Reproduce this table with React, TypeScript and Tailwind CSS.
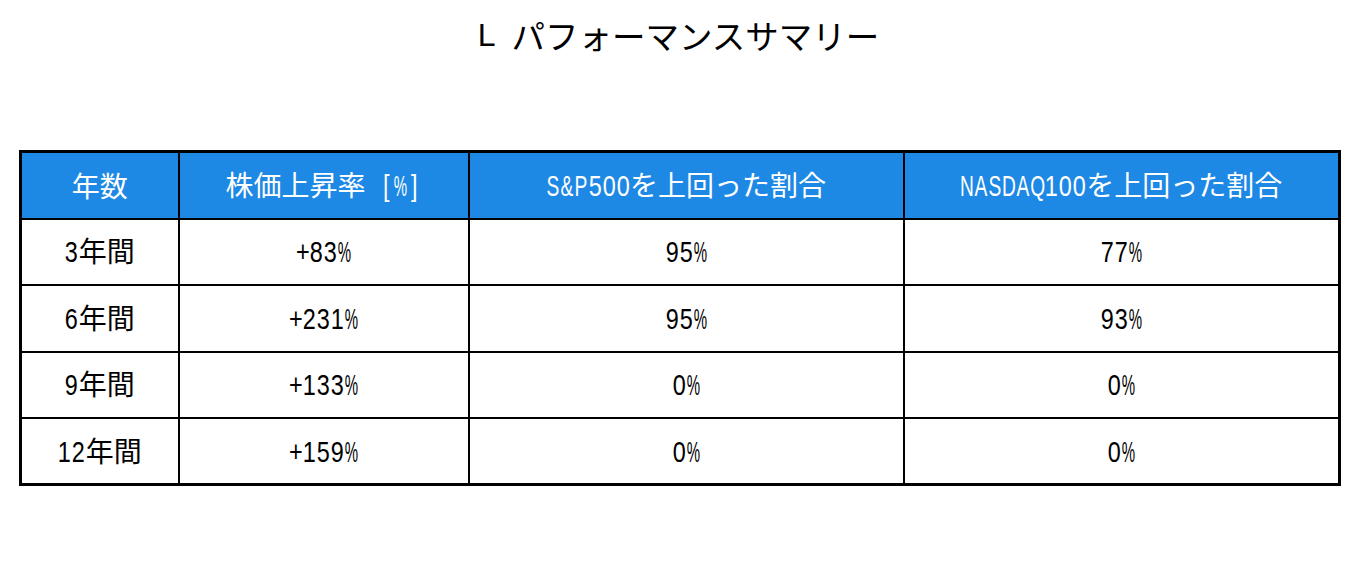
const cjk = '"Noto Sans CJK JP", sans-serif';

const headers = ["年数", "株価上昇率 [%]", "S&P500を上回った割合", "NASDAQ100を上回った割合"];

const rows = [
  ["3年間", "+83%", "95%", "77%"],
  ["6年間", "+231%", "95%", "93%"],
  ["9年間", "+133%", "0%", "0%"],
  ["12年間", "+159%", "0%", "0%"],
];

const widths = ["w-[158px]", "w-[290px]", "w-[435px]", "w-[436px]"];

function squeeze(ch: string) {
  if (ch === "%") return "inline-block scale-x-[0.5]";
  if (/[A-Z&]/.test(ch)) return "inline-block scale-x-[0.64]";
  return "inline-block scale-x-[0.78]";
}

// half-width chars sit in 14px cells, squeezed like a Japanese gothic's hankaku glyphs
function Cell({ text }: { text: string }) {
  return (
    <>
      {Array.from(text).map((ch, i) =>
        ch.charCodeAt(0) < 0x7f ? (
          <span key={i} className="inline-flex w-[14px] justify-center font-['Liberation_Sans',sans-serif] text-[30px] whitespace-pre">
            <span className={squeeze(ch)}>{ch}</span>
          </span>
        ) : (
          <span key={i}>{ch}</span>
        ),
      )}
    </>
  );
}

export default function App() {
  return (
    <div className="w-[1357px] h-[569px] bg-white text-black" style={{ fontFamily: cjk }}>
      <div className="h-[56px] pt-[14px] flex justify-center items-center text-[33.5px] leading-none">
        <span className="font-['Liberation_Sans',sans-serif] text-[32px] mr-[16px]">L</span>
        <span>パフォーマンスサマリー</span>
      </div>

      <div className="px-[19px] pt-[94px]">
        <table className="w-full table-fixed border-collapse border-[3px] border-black">
          <colgroup>
            {widths.map((w) => (
              <col key={w} className={w} />
            ))}
          </colgroup>
          <thead>
            <tr className="h-[67px] bg-[#1e88e5] text-white">
              {headers.map((h) => (
                <th key={h} className="border-2 border-black text-[28px] leading-none font-normal">
                  <Cell text={h} />
                </th>
              ))}
            </tr>
          </thead>
          <tbody>
            {rows.map((r) => (
              <tr key={r[0]} className="h-[66.5px]">
                {r.map((c, i) => (
                  <td key={i} className="border-2 border-black text-center text-[28px] leading-none">
                    <Cell text={c} />
                  </td>
                ))}
              </tr>
            ))}
          </tbody>
        </table>
      </div>
    </div>
  );
}
